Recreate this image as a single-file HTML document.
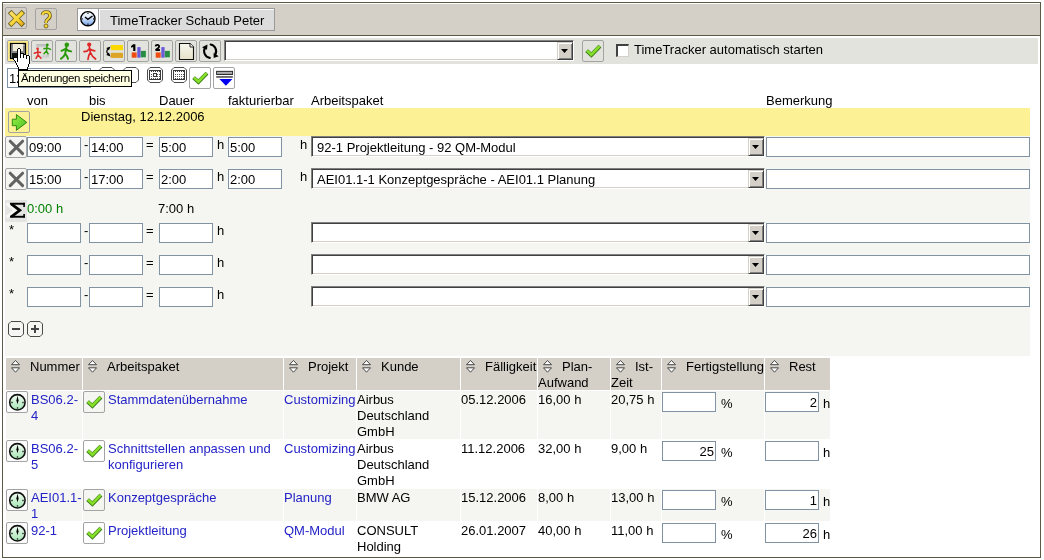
<!DOCTYPE html><html><head><meta charset="utf-8"><style>
html,body{margin:0;padding:0;background:#fff;width:1044px;height:560px;overflow:hidden}
body{position:relative;font-family:"Liberation Sans",sans-serif}
.t{position:absolute;line-height:16px;white-space:nowrap;font-family:"Liberation Sans",sans-serif;will-change:transform}
.inp{position:absolute;box-sizing:border-box;border:1px solid #8193a3;background:#fff}
.sel{position:absolute;box-sizing:border-box;background:#fff;border-top:1px solid #808080;border-left:1px solid #808080;border-right:1px solid #fff;border-bottom:1px solid #fff;box-shadow:inset 1px 1px 0 #404040,inset -1px -1px 0 #d4d0c8}
.ddb{position:absolute;box-sizing:border-box;background:#d4d0c8;border-top:1px solid #d4d0c8;border-left:1px solid #d4d0c8;border-right:1px solid #404040;border-bottom:1px solid #404040;box-shadow:inset 1px 1px 0 #fff,inset -1px -1px 0 #808080}
.tri{position:absolute;left:3px;top:6px;width:7px;height:4px;background:#000;clip-path:polygon(0 0,100% 0,50% 100%)}
.btn{position:absolute;box-sizing:border-box;border:1px solid #a3a3a3;border-radius:2px}
.ab{position:absolute}
</style></head><body>
<div style="position:absolute;left:2px;top:2px;width:1039px;height:556px;box-sizing:border-box;border:1px solid #5c5a46"></div>
<div style="position:absolute;left:3px;top:3px;width:1037px;height:1px;background:#fff"></div>
<div style="position:absolute;left:3px;top:4px;width:1037px;height:31px;background:#d4d0c8"></div>
<div style="position:absolute;left:3px;top:35px;width:1037px;height:1px;background:#5c5a46"></div>
<div style="position:absolute;left:5px;top:38px;width:1033px;height:26px;background:#e3e3de"></div>
<div class="btn" style="left:5px;top:7px;width:22px;height:22px"></div>
<svg class="ab" style="left:5px;top:7px" width="22" height="22" viewBox="0 0 22 22"><defs><linearGradient id="xg" x1="0" y1="0" x2="1" y2="1"><stop offset="0" stop-color="#fbe070"/><stop offset="0.6" stop-color="#f8d430"/><stop offset="1" stop-color="#e8a818"/></linearGradient></defs><path d="M4.6 4.6 L18.4 18.4 M18.4 4.6 L4.6 18.4" stroke="#6b6020" stroke-width="5" stroke-linecap="butt"/><path d="M5.3 5.3 L17.7 17.7 M17.7 5.3 L5.3 17.7" stroke="url(#xg)" stroke-width="3.4" stroke-linecap="butt"/></svg>
<div class="btn" style="left:35px;top:8px;width:22px;height:22px"></div>
<svg class="ab" style="left:35px;top:8px" width="22" height="22" viewBox="0 0 22 22"><path d="M7.5 7 Q8 4 11 4 Q15 4 15 7.5 Q15 10 12.5 11.5 Q11 12.5 11 15" fill="none" stroke="#6b6020" stroke-width="3.6"/><path d="M7.5 7 Q8 4 11 4 Q15 4 15 7.5 Q15 10 12.5 11.5 Q11 12.5 11 15" fill="none" stroke="#f8d838" stroke-width="2"/><circle cx="11" cy="18" r="2" fill="#f8d838" stroke="#6b6020" stroke-width="0.9"/></svg>
<div style="position:absolute;left:77px;top:8px;width:198px;height:23px;box-sizing:border-box;border:1px solid #9a9a9a;background:#dcdcdc"></div>
<div style="position:absolute;left:78px;top:9px;width:20px;height:21px;background:#fff"></div>
<div style="position:absolute;left:98px;top:9px;width:1px;height:21px;background:#a0a0a0"></div>
<div style="position:absolute;left:99px;top:9px;width:175px;height:1px;background:#fff"></div>
<div style="position:absolute;left:99px;top:9px;width:1px;height:21px;background:#fff"></div>
<svg class="ab" style="left:78px;top:9px" width="20" height="21" viewBox="0 0 20 21"><defs><linearGradient id="cg" x1="0" y1="0" x2="0" y2="1"><stop offset="0" stop-color="#ffffff"/><stop offset="0.45" stop-color="#d8e6fb"/><stop offset="1" stop-color="#6e9ee8"/></linearGradient></defs><circle cx="9.9" cy="9.7" r="7.1" fill="url(#cg)" stroke="#000" stroke-width="1.4"/><path d="M7 8 L9.9 10.3 L14.5 7" fill="none" stroke="#000" stroke-width="1.4"/><rect x="9.2" y="3.7" width="1.5" height="1.2" fill="#333"/><rect x="9.2" y="14.6" width="1.5" height="1.2" fill="#333"/><rect x="3.6" y="9.2" width="1.2" height="1.5" fill="#333"/><rect x="15" y="9.2" width="1.2" height="1.5" fill="#333"/></svg>
<div class="t" style="left:110px;top:13px;font-size:13px;color:#000;">TimeTracker Schaub Peter</div>
<div class="btn" style="left:7px;top:40px;width:22px;height:22px"></div>
<div class="btn" style="left:31px;top:40px;width:22px;height:22px"></div>
<div class="btn" style="left:55px;top:40px;width:22px;height:22px"></div>
<div class="btn" style="left:79px;top:40px;width:22px;height:22px"></div>
<div class="btn" style="left:103px;top:40px;width:22px;height:22px"></div>
<div class="btn" style="left:127px;top:40px;width:22px;height:22px"></div>
<div class="btn" style="left:151px;top:40px;width:22px;height:22px"></div>
<div class="btn" style="left:175px;top:40px;width:22px;height:22px"></div>
<div class="btn" style="left:199px;top:40px;width:22px;height:22px"></div>
<div style="position:absolute;left:8px;top:41px;width:20px;height:20px;box-sizing:border-box;border:2px solid #fbe98a"></div>
<svg class="ab" style="left:7px;top:40px" width="22" height="22" viewBox="0 0 22 22"><rect x="3.5" y="3.5" width="15" height="15" fill="#8a8a88" stroke="#000" stroke-width="1.2"/><rect x="6" y="4" width="10" height="7" fill="#f0ecd8"/><rect x="5" y="13" width="12" height="5" fill="#111"/><rect x="16.3" y="4.6" width="1" height="1.2" fill="#ddd"/></svg>
<svg class="ab" style="left:31px;top:40px" width="22" height="22" viewBox="0 0 22 22"><defs><linearGradient id="gb" x1="0" y1="0" x2="0" y2="1"><stop offset="0" stop-color="#b8b8b8"/><stop offset="1" stop-color="#e0e0e0"/></linearGradient></defs><path d="M5.2 4 L15.5 4 L15.5 7.2 L7.8 7.2 L7.8 9.5 L5.2 9.5 Z" fill="url(#gb)"/><path d="M15.6 13.8 L18.2 13.8 L18.2 18.6 L10.5 18.6 L10.5 15.6 L15.6 15.6 Z" fill="url(#gb)"/><g stroke="#dd2a2a" stroke-width="1.5" fill="none" stroke-linecap="round"><path d="M6.8 10 L7 15 M3.3 13.3 L6.8 12 L9.5 12.6 M7 15 L5 18.3 M7 15 L10 18.2"/></g><circle cx="6.6" cy="8.7" r="1.3" fill="#dd2a2a"/><g stroke="#2a9a0a" stroke-width="1.5" fill="none" stroke-linecap="round"><path d="M16 6 L15.5 11 M13 8.7 L16 7.8 L19.5 9.4 M15.5 11 L13 13.8 M15.5 11 L17 13.7"/></g><circle cx="16.3" cy="4.9" r="1.4" fill="#2a9a0a"/></svg>
<svg class="ab" style="left:55px;top:40px" width="22" height="22" viewBox="0 0 22 22"><g stroke="#2a9a0a" stroke-width="2" fill="none" stroke-linecap="round" stroke-linejoin="round"><path d="M11.4 7 L10.2 13.6 M6.5 10.8 L10.6 8.8 L13.6 10.8 L16.2 11.4 M10.2 13.6 L8.6 16.6 L6 18.8 M10.2 13.6 L12 16.2 L13 18.9"/></g><circle cx="11.8" cy="4.7" r="2.3" fill="#2a9a0a"/></svg>
<svg class="ab" style="left:79px;top:40px" width="22" height="22" viewBox="0 0 22 22"><g stroke="#de2828" stroke-width="1.7" fill="none" stroke-linecap="round" stroke-linejoin="round"><path d="M10.3 6.5 L11.4 12.4 M5 11.6 L8 11.2 L10.6 8.6 L13 10.2 L15.8 10.8 M11.4 12.4 L9.8 15.5 L9 19.4 M11.4 12.4 L13.6 16.4 L16.6 19"/></g><circle cx="10.2" cy="4.5" r="2.1" fill="#de2828"/></svg>
<svg class="ab" style="left:103px;top:40px" width="22" height="22" viewBox="0 0 22 22"><rect x="7.8" y="5" width="12.2" height="5.2" fill="#fbd800"/><rect x="7.8" y="12.8" width="12.2" height="5.1" fill="#dea524"/><path d="M5 9 Q2.6 11.4 5 13.8" fill="none" stroke="#111" stroke-width="1.3"/><path d="M3.2 7.9 L7.6 6.4 L5.9 10.2 Z M3.2 14.9 L7.6 16.4 L5.9 12.6 Z" fill="#000"/></svg>
<svg class="ab" style="left:127px;top:40px" width="22" height="22" viewBox="0 0 22 22"><path d="M6.2 4.2 H8.4 V11.1 H6.2 V7 L4.1 7.8 V5.9 Z" fill="#000"/><rect x="4.7" y="12.4" width="5" height="5.3" fill="#f04e10"/><rect x="10.3" y="7.1" width="3.3" height="10.6" fill="#6a5ad6"/><rect x="13.8" y="10.9" width="4.8" height="6.4" fill="#2a8a4a"/><rect x="17.6" y="10.9" width="1" height="6.2" fill="#1c9a2a"/></svg>
<svg class="ab" style="left:151px;top:40px" width="22" height="22" viewBox="0 0 22 22"><path d="M4.5 6.4 Q4.7 4.9 6.4 4.9 Q8.1 4.9 8.1 6.5 Q8.1 7.6 6.7 8.5 L4.6 10 H8.9" fill="none" stroke="#000" stroke-width="1.8" stroke-linejoin="bevel"/><rect x="4.7" y="12.4" width="5" height="5.3" fill="#f04e10"/><rect x="10.3" y="7.1" width="3.3" height="10.6" fill="#6a5ad6"/><rect x="13.8" y="10.9" width="4.8" height="6.4" fill="#2a8a4a"/><rect x="17.6" y="10.9" width="1" height="6.2" fill="#1c9a2a"/></svg>
<svg class="ab" style="left:175px;top:40px" width="22" height="22" viewBox="0 0 22 22"><defs><linearGradient id="dg" x1="0" y1="0" x2="0" y2="1"><stop offset="0" stop-color="#f6f6ee"/><stop offset="1" stop-color="#e6e2c8"/></linearGradient></defs><path d="M4.5 3.5 L15 3.5 L18.5 7 L18.5 19.5 L4.5 19.5 Z" fill="url(#dg)" stroke="#111" stroke-width="1.1"/><path d="M15 3.5 L15 7 L18.5 7" fill="#fff" stroke="#111" stroke-width="0.9"/></svg>
<svg class="ab" style="left:199px;top:40px" width="22" height="22" viewBox="0 0 22 22"><g fill="none" stroke="#000" stroke-width="2.1" stroke-linecap="round"><path d="M10.8 17.9 A6.8 6.8 0 0 1 6.3 7.4"/><path d="M11.6 4.5 A6.8 6.8 0 0 1 16.2 14.6"/></g><path d="M3 7.3 L8.5 4.5 L8 9.8 Z" fill="#000"/><path d="M14.6 13 L19.7 16.2 L14.7 18 Z" fill="#000"/></svg>
<div class="sel" style="left:224px;top:40px;width:350px;height:21px"></div>
<div class="ddb" style="left:557px;top:42px;width:16px;height:18px"><div class="tri"></div></div>
<div class="btn" style="left:582px;top:40px;width:22px;height:22px"></div>
<svg class="ab" style="left:582px;top:40px" width="22" height="22" viewBox="0 0 22 22"><path d="M4.6 10.6 L9.4 15.0 L18.0 6.2" fill="none" stroke="#3a7a18" stroke-width="4" stroke-linecap="butt" stroke-linejoin="miter"/><path d="M5.0 10.6 L9.4 14.6 L17.6 6.2" fill="none" stroke="#86e02a" stroke-width="2.6" stroke-linecap="butt" stroke-linejoin="miter"/></svg>
<div style="position:absolute;left:616px;top:44px;width:13px;height:13px;box-sizing:border-box;background:#fff;border-top:2px solid #404040;border-left:2px solid #404040;border-right:1px solid #d4d0c8;border-bottom:1px solid #d4d0c8"></div>
<div class="t" style="left:634px;top:42px;font-size:13px;color:#000;">TimeTracker automatisch starten</div>
<div class="inp" style="left:7px;top:68px;width:84px;height:20px;background:#fff"></div>
<div class="t" style="left:9px;top:71px;font-size:13px;color:#000;">12.12.2006</div>
<svg class="ab" style="left:99px;top:67px" width="16" height="16" viewBox="0 0 16 16"><path d="M3 0.5 H13 L15.5 3 V13 L13 15.5 H3 L0.5 13 V3 Z" fill="none" stroke="#4a4a4a" stroke-width="1"/></svg>
<svg class="ab" style="left:123px;top:67px" width="16" height="16" viewBox="0 0 16 16"><path d="M3 0.5 H13 L15.5 3 V13 L13 15.5 H3 L0.5 13 V3 Z" fill="none" stroke="#4a4a4a" stroke-width="1"/></svg>
<svg class="ab" style="left:147px;top:67px" width="16" height="16" viewBox="0 0 16 16"><path d="M3 0.5 H13 L15.5 3 V13 L13 15.5 H3 L0.5 13 V3 Z" fill="none" stroke="#4a4a4a" stroke-width="1"/></svg>
<svg class="ab" style="left:147px;top:67px" width="16" height="16" viewBox="0 0 16 16"><g shape-rendering="crispEdges"><rect x="2" y="3" width="12" height="10" fill="#3a3a3a"/><rect x="3" y="5" width="10" height="7" fill="#fff"/><rect x="3" y="4" width="1" height="1" fill="#fff"/><rect x="5" y="4" width="1" height="1" fill="#fff"/><rect x="7" y="4" width="1" height="1" fill="#fff"/><rect x="9" y="4" width="1" height="1" fill="#fff"/><rect x="11" y="4" width="1" height="1" fill="#fff"/><rect x="4" y="7" width="1" height="1" fill="#555"/><rect x="4" y="9" width="1" height="1" fill="#555"/><rect x="6" y="7" width="1" height="1" fill="#555"/><rect x="6" y="9" width="1" height="1" fill="#555"/><rect x="8" y="7" width="1" height="1" fill="#555"/><rect x="8" y="9" width="1" height="1" fill="#555"/><rect x="10" y="7" width="1" height="1" fill="#555"/><rect x="10" y="9" width="1" height="1" fill="#555"/><rect x="12" y="7" width="1" height="1" fill="#555"/><rect x="12" y="9" width="1" height="1" fill="#555"/><rect x="4" y="11" width="1" height="1" fill="#555"/><rect x="6" y="11" width="1" height="1" fill="#555"/><rect x="8" y="11" width="1" height="1" fill="#555"/><rect x="10" y="11" width="1" height="1" fill="#555"/><rect x="12" y="11" width="1" height="1" fill="#555"/><rect x="6" y="6" width="4" height="4" fill="#3a3a3a"/><rect x="7" y="7" width="2" height="2" fill="#fff"/></g></svg>
<svg class="ab" style="left:171px;top:67px" width="16" height="16" viewBox="0 0 16 16"><path d="M3 0.5 H13 L15.5 3 V13 L13 15.5 H3 L0.5 13 V3 Z" fill="none" stroke="#4a4a4a" stroke-width="1"/></svg>
<svg class="ab" style="left:171px;top:67px" width="16" height="16" viewBox="0 0 16 16"><g shape-rendering="crispEdges"><rect x="2" y="3" width="12" height="10" fill="#3a3a3a"/><rect x="3" y="5" width="10" height="7" fill="#fff"/><rect x="3" y="4" width="1" height="1" fill="#fff"/><rect x="5" y="4" width="1" height="1" fill="#fff"/><rect x="7" y="4" width="1" height="1" fill="#fff"/><rect x="9" y="4" width="1" height="1" fill="#fff"/><rect x="11" y="4" width="1" height="1" fill="#fff"/><rect x="4" y="7" width="1" height="1" fill="#555"/><rect x="4" y="9" width="1" height="1" fill="#555"/><rect x="6" y="7" width="1" height="1" fill="#555"/><rect x="6" y="9" width="1" height="1" fill="#555"/><rect x="8" y="7" width="1" height="1" fill="#555"/><rect x="8" y="9" width="1" height="1" fill="#555"/><rect x="10" y="7" width="1" height="1" fill="#555"/><rect x="10" y="9" width="1" height="1" fill="#555"/><rect x="12" y="7" width="1" height="1" fill="#555"/><rect x="12" y="9" width="1" height="1" fill="#555"/><rect x="4" y="11" width="1" height="1" fill="#555"/><rect x="6" y="11" width="1" height="1" fill="#555"/><rect x="8" y="11" width="1" height="1" fill="#555"/><rect x="10" y="11" width="1" height="1" fill="#555"/><rect x="12" y="11" width="1" height="1" fill="#555"/></g></svg>
<div class="btn" style="left:189px;top:67px;width:22px;height:22px"></div>
<svg class="ab" style="left:189px;top:67px" width="22" height="22" viewBox="0 0 22 22"><path d="M4.6 10.6 L9.4 15.0 L18.0 6.2" fill="none" stroke="#3a7a18" stroke-width="4" stroke-linecap="butt" stroke-linejoin="miter"/><path d="M5.0 10.6 L9.4 14.6 L17.6 6.2" fill="none" stroke="#86e02a" stroke-width="2.6" stroke-linecap="butt" stroke-linejoin="miter"/></svg>
<div class="btn" style="left:213px;top:67px;width:22px;height:22px"></div>
<svg class="ab" style="left:213px;top:67px" width="22" height="22" viewBox="0 0 22 22"><defs><linearGradient id="fg" x1="0" y1="0" x2="0" y2="1"><stop offset="0" stop-color="#555"/><stop offset="0.5" stop-color="#ccc"/><stop offset="1" stop-color="#555"/></linearGradient></defs><rect x="3.6" y="4.3" width="16" height="3.2" fill="url(#fg)" stroke="#222" stroke-width="0.9"/><rect x="3.2" y="9.1" width="16.6" height="1.7" fill="#5a5a5a"/><path d="M6.4 12 L19.4 12 L12.9 18.7 Z" fill="#0000f0"/></svg>
<div class="t" style="left:27px;top:93px;font-size:13px;color:#000;">von</div>
<div class="t" style="left:89px;top:93px;font-size:13px;color:#000;">bis</div>
<div class="t" style="left:159px;top:93px;font-size:13px;color:#000;">Dauer</div>
<div class="t" style="left:228px;top:93px;font-size:13px;color:#000;">fakturierbar</div>
<div class="t" style="left:311px;top:93px;font-size:13px;color:#000;">Arbeitspaket</div>
<div class="t" style="left:766px;top:93px;font-size:13px;color:#000;">Bemerkung</div>
<div style="position:absolute;left:5px;top:108px;width:1025px;height:28px;background:#fcf295"></div>
<div class="btn" style="left:8px;top:111px;width:22px;height:22px"></div>
<svg class="ab" style="left:8px;top:111px" width="22" height="22" viewBox="0 0 22 22"><defs><linearGradient id="ag" x1="0" y1="0" x2="1" y2="1"><stop offset="0" stop-color="#9ef048"/><stop offset="1" stop-color="#46c020"/></linearGradient></defs><path d="M4.3 8.2 L8.4 8.2 L8.4 3.6 L18.8 11.4 L8.4 19.3 L8.4 14.7 L4.3 14.7 Z" fill="url(#ag)" stroke="#2e8a10" stroke-width="1"/></svg>
<div class="t" style="left:81px;top:109px;font-size:13px;color:#000;">Dienstag, 12.12.2006</div>
<div style="position:absolute;left:5px;top:136px;width:1025px;height:220px;background:#f5f5f1"></div>
<div class="btn" style="left:5px;top:136px;width:22px;height:22px"></div>
<svg class="ab" style="left:5px;top:136px" width="22" height="22" viewBox="0 0 22 22"><path d="M5.2 5.2 L17.6 17.6 M17.6 5.2 L5.2 17.6" stroke="#626262" stroke-width="3" stroke-linecap="round"/></svg>
<div class="inp" style="left:27px;top:137px;width:54px;height:20px;background:#fff"></div>
<div class="t" style="left:29px;top:140px;font-size:13px;color:#000;">09:00</div>
<div class="t" style="left:84px;top:137px;font-size:13px;color:#000;">-</div>
<div class="inp" style="left:89px;top:137px;width:54px;height:20px;background:#fff"></div>
<div class="t" style="left:91px;top:140px;font-size:13px;color:#000;">14:00</div>
<div class="t" style="left:146px;top:137px;font-size:13px;color:#000;">=</div>
<div class="inp" style="left:159px;top:137px;width:54px;height:20px;background:#fff"></div>
<div class="t" style="left:161px;top:140px;font-size:13px;color:#000;">5:00</div>
<div class="t" style="left:217px;top:137px;font-size:13px;color:#000;">h</div>
<div class="inp" style="left:228px;top:137px;width:54px;height:20px;background:#fff"></div>
<div class="t" style="left:230px;top:140px;font-size:13px;color:#000;">5:00</div>
<div class="t" style="left:300px;top:137px;font-size:13px;color:#000;">h</div>
<div class="sel" style="left:311px;top:136px;width:454px;height:21px"></div>
<div class="ddb" style="left:748px;top:138px;width:16px;height:18px"><div class="tri"></div></div>
<div class="t" style="left:317px;top:140px;font-size:13px;color:#000;">92-1 Projektleitung - 92 QM-Modul</div>
<div class="inp" style="left:766px;top:137px;width:264px;height:20px;background:#fff"></div>
<div class="btn" style="left:5px;top:168px;width:22px;height:22px"></div>
<svg class="ab" style="left:5px;top:168px" width="22" height="22" viewBox="0 0 22 22"><path d="M5.2 5.2 L17.6 17.6 M17.6 5.2 L5.2 17.6" stroke="#626262" stroke-width="3" stroke-linecap="round"/></svg>
<div class="inp" style="left:27px;top:169px;width:54px;height:20px;background:#fff"></div>
<div class="t" style="left:29px;top:172px;font-size:13px;color:#000;">15:00</div>
<div class="t" style="left:84px;top:169px;font-size:13px;color:#000;">-</div>
<div class="inp" style="left:89px;top:169px;width:54px;height:20px;background:#fff"></div>
<div class="t" style="left:91px;top:172px;font-size:13px;color:#000;">17:00</div>
<div class="t" style="left:146px;top:169px;font-size:13px;color:#000;">=</div>
<div class="inp" style="left:159px;top:169px;width:54px;height:20px;background:#fff"></div>
<div class="t" style="left:161px;top:172px;font-size:13px;color:#000;">2:00</div>
<div class="t" style="left:217px;top:169px;font-size:13px;color:#000;">h</div>
<div class="inp" style="left:228px;top:169px;width:54px;height:20px;background:#fff"></div>
<div class="t" style="left:230px;top:172px;font-size:13px;color:#000;">2:00</div>
<div class="t" style="left:300px;top:169px;font-size:13px;color:#000;">h</div>
<div class="sel" style="left:311px;top:168px;width:454px;height:21px"></div>
<div class="ddb" style="left:748px;top:170px;width:16px;height:18px"><div class="tri"></div></div>
<div class="t" style="left:317px;top:172px;font-size:13px;color:#000;">AEI01.1-1 Konzeptgespräche - AEI01.1 Planung</div>
<div class="inp" style="left:766px;top:169px;width:264px;height:20px;background:#fff"></div>
<div style="position:absolute;left:5px;top:200px;width:22px;height:22px;background:#e4e4e2"></div>
<svg class="ab" style="left:5px;top:200px" width="22" height="22" viewBox="0 0 22 22"><path d="M1.5 3.5 L10.5 10.3 L1.5 17.2" fill="none" stroke="#f6f6f4" stroke-width="3.2"/><rect x="5" y="2.8" width="14.9" height="1.9" fill="#000"/><rect x="18.3" y="2.8" width="1.6" height="4.2" fill="#000"/><rect x="5" y="15.8" width="14.9" height="1.9" fill="#000"/><rect x="18.3" y="14" width="1.6" height="3.7" fill="#000"/><path d="M6.2 3.8 L14.8 10.3 L6.2 16.8" fill="none" stroke="#000" stroke-width="2.7" stroke-linejoin="miter" stroke-miterlimit="10"/></svg>
<div class="t" style="left:27px;top:201px;font-size:13px;color:#008000;">0:00 h</div>
<div class="t" style="left:158px;top:201px;font-size:13px;color:#000;">7:00 h</div>
<div class="t" style="left:9px;top:222px;font-size:13px;color:#000;">*</div>
<div class="inp" style="left:27px;top:223px;width:54px;height:20px;background:#fff"></div>
<div class="t" style="left:84px;top:223px;font-size:13px;color:#000;">-</div>
<div class="inp" style="left:89px;top:223px;width:54px;height:20px;background:#fff"></div>
<div class="t" style="left:146px;top:223px;font-size:13px;color:#000;">=</div>
<div class="inp" style="left:159px;top:223px;width:54px;height:20px;background:#fff"></div>
<div class="t" style="left:217px;top:223px;font-size:13px;color:#000;">h</div>
<div class="sel" style="left:311px;top:222px;width:454px;height:21px"></div>
<div class="ddb" style="left:748px;top:224px;width:16px;height:18px"><div class="tri"></div></div>
<div class="inp" style="left:766px;top:223px;width:264px;height:20px;background:#fff"></div>
<div class="t" style="left:9px;top:254px;font-size:13px;color:#000;">*</div>
<div class="inp" style="left:27px;top:255px;width:54px;height:20px;background:#fff"></div>
<div class="t" style="left:84px;top:255px;font-size:13px;color:#000;">-</div>
<div class="inp" style="left:89px;top:255px;width:54px;height:20px;background:#fff"></div>
<div class="t" style="left:146px;top:255px;font-size:13px;color:#000;">=</div>
<div class="inp" style="left:159px;top:255px;width:54px;height:20px;background:#fff"></div>
<div class="t" style="left:217px;top:255px;font-size:13px;color:#000;">h</div>
<div class="sel" style="left:311px;top:254px;width:454px;height:21px"></div>
<div class="ddb" style="left:748px;top:256px;width:16px;height:18px"><div class="tri"></div></div>
<div class="inp" style="left:766px;top:255px;width:264px;height:20px;background:#fff"></div>
<div class="t" style="left:9px;top:286px;font-size:13px;color:#000;">*</div>
<div class="inp" style="left:27px;top:287px;width:54px;height:20px;background:#fff"></div>
<div class="t" style="left:84px;top:287px;font-size:13px;color:#000;">-</div>
<div class="inp" style="left:89px;top:287px;width:54px;height:20px;background:#fff"></div>
<div class="t" style="left:146px;top:287px;font-size:13px;color:#000;">=</div>
<div class="inp" style="left:159px;top:287px;width:54px;height:20px;background:#fff"></div>
<div class="t" style="left:217px;top:287px;font-size:13px;color:#000;">h</div>
<div class="sel" style="left:311px;top:286px;width:454px;height:21px"></div>
<div class="ddb" style="left:748px;top:288px;width:16px;height:18px"><div class="tri"></div></div>
<div class="inp" style="left:766px;top:287px;width:264px;height:20px;background:#fff"></div>
<svg class="ab" style="left:8px;top:321px" width="16" height="16" viewBox="0 0 16 16"><path d="M3 0.5 H13 L15.5 3 V13 L13 15.5 H3 L0.5 13 V3 Z" fill="none" stroke="#4a4a4a" stroke-width="1"/></svg>
<svg class="ab" style="left:8px;top:321px" width="16" height="16" viewBox="0 0 16 16"><g shape-rendering="crispEdges"><rect x="4" y="7" width="8" height="2" fill="#444"/></g></svg>
<svg class="ab" style="left:27px;top:321px" width="16" height="16" viewBox="0 0 16 16"><path d="M3 0.5 H13 L15.5 3 V13 L13 15.5 H3 L0.5 13 V3 Z" fill="none" stroke="#4a4a4a" stroke-width="1"/></svg>
<svg class="ab" style="left:27px;top:321px" width="16" height="16" viewBox="0 0 16 16"><g shape-rendering="crispEdges"><rect x="4" y="7" width="8" height="2" fill="#444"/><rect x="7" y="4" width="2" height="8" fill="#444"/></g></svg>
<div style="position:absolute;left:6px;top:358px;width:76px;height:32px;background:#d4d0c8"></div>
<svg class="ab" style="left:11px;top:359px" width="10" height="15" viewBox="0 0 10 15"><path d="M4.5 1.5 L8.5 5.7 L0.5 5.7 Z" fill="#fff" stroke="#404040" stroke-width="0.95" stroke-linejoin="round"/><path d="M0.5 8.8 L8.5 8.8 L4.5 13.2 Z" fill="#fff" stroke="#404040" stroke-width="0.95" stroke-linejoin="round"/></svg>
<div class="t" style="left:30px;top:359px;font-size:13px;color:#000;">Nummer</div>
<div style="position:absolute;left:83px;top:358px;width:200px;height:32px;background:#d4d0c8"></div>
<svg class="ab" style="left:88px;top:359px" width="10" height="15" viewBox="0 0 10 15"><path d="M4.5 1.5 L8.5 5.7 L0.5 5.7 Z" fill="#fff" stroke="#404040" stroke-width="0.95" stroke-linejoin="round"/><path d="M0.5 8.8 L8.5 8.8 L4.5 13.2 Z" fill="#fff" stroke="#404040" stroke-width="0.95" stroke-linejoin="round"/></svg>
<div class="t" style="left:107px;top:359px;font-size:13px;color:#000;">Arbeitspaket</div>
<div style="position:absolute;left:284px;top:358px;width:72px;height:32px;background:#d4d0c8"></div>
<svg class="ab" style="left:289px;top:359px" width="10" height="15" viewBox="0 0 10 15"><path d="M4.5 1.5 L8.5 5.7 L0.5 5.7 Z" fill="#fff" stroke="#404040" stroke-width="0.95" stroke-linejoin="round"/><path d="M0.5 8.8 L8.5 8.8 L4.5 13.2 Z" fill="#fff" stroke="#404040" stroke-width="0.95" stroke-linejoin="round"/></svg>
<div class="t" style="left:308px;top:359px;font-size:13px;color:#000;">Projekt</div>
<div style="position:absolute;left:357px;top:358px;width:103px;height:32px;background:#d4d0c8"></div>
<svg class="ab" style="left:362px;top:359px" width="10" height="15" viewBox="0 0 10 15"><path d="M4.5 1.5 L8.5 5.7 L0.5 5.7 Z" fill="#fff" stroke="#404040" stroke-width="0.95" stroke-linejoin="round"/><path d="M0.5 8.8 L8.5 8.8 L4.5 13.2 Z" fill="#fff" stroke="#404040" stroke-width="0.95" stroke-linejoin="round"/></svg>
<div class="t" style="left:381px;top:359px;font-size:13px;color:#000;">Kunde</div>
<div style="position:absolute;left:461px;top:358px;width:76px;height:32px;background:#d4d0c8"></div>
<svg class="ab" style="left:466px;top:359px" width="10" height="15" viewBox="0 0 10 15"><path d="M4.5 1.5 L8.5 5.7 L0.5 5.7 Z" fill="#fff" stroke="#404040" stroke-width="0.95" stroke-linejoin="round"/><path d="M0.5 8.8 L8.5 8.8 L4.5 13.2 Z" fill="#fff" stroke="#404040" stroke-width="0.95" stroke-linejoin="round"/></svg>
<div class="t" style="left:485px;top:359px;font-size:13px;color:#000;">Fälligkeit</div>
<div style="position:absolute;left:538px;top:358px;width:72px;height:32px;background:#d4d0c8"></div>
<svg class="ab" style="left:543px;top:359px" width="10" height="15" viewBox="0 0 10 15"><path d="M4.5 1.5 L8.5 5.7 L0.5 5.7 Z" fill="#fff" stroke="#404040" stroke-width="0.95" stroke-linejoin="round"/><path d="M0.5 8.8 L8.5 8.8 L4.5 13.2 Z" fill="#fff" stroke="#404040" stroke-width="0.95" stroke-linejoin="round"/></svg>
<div class="t" style="left:562px;top:359px;font-size:13px;color:#000;">Plan-</div>
<div style="position:absolute;left:611px;top:358px;width:50px;height:32px;background:#d4d0c8"></div>
<svg class="ab" style="left:616px;top:359px" width="10" height="15" viewBox="0 0 10 15"><path d="M4.5 1.5 L8.5 5.7 L0.5 5.7 Z" fill="#fff" stroke="#404040" stroke-width="0.95" stroke-linejoin="round"/><path d="M0.5 8.8 L8.5 8.8 L4.5 13.2 Z" fill="#fff" stroke="#404040" stroke-width="0.95" stroke-linejoin="round"/></svg>
<div class="t" style="left:635px;top:359px;font-size:13px;color:#000;">Ist-</div>
<div style="position:absolute;left:662px;top:358px;width:102px;height:32px;background:#d4d0c8"></div>
<svg class="ab" style="left:667px;top:359px" width="10" height="15" viewBox="0 0 10 15"><path d="M4.5 1.5 L8.5 5.7 L0.5 5.7 Z" fill="#fff" stroke="#404040" stroke-width="0.95" stroke-linejoin="round"/><path d="M0.5 8.8 L8.5 8.8 L4.5 13.2 Z" fill="#fff" stroke="#404040" stroke-width="0.95" stroke-linejoin="round"/></svg>
<div class="t" style="left:686px;top:359px;font-size:13px;color:#000;">Fertigstellung</div>
<div style="position:absolute;left:765px;top:358px;width:65px;height:32px;background:#d4d0c8"></div>
<svg class="ab" style="left:770px;top:359px" width="10" height="15" viewBox="0 0 10 15"><path d="M4.5 1.5 L8.5 5.7 L0.5 5.7 Z" fill="#fff" stroke="#404040" stroke-width="0.95" stroke-linejoin="round"/><path d="M0.5 8.8 L8.5 8.8 L4.5 13.2 Z" fill="#fff" stroke="#404040" stroke-width="0.95" stroke-linejoin="round"/></svg>
<div class="t" style="left:789px;top:359px;font-size:13px;color:#000;">Rest</div>
<div class="t" style="left:538px;top:375px;font-size:13px;color:#000;">Aufwand</div>
<div class="t" style="left:611px;top:375px;font-size:13px;color:#000;">Zeit</div>
<div style="position:absolute;left:6px;top:391px;width:76px;height:48px;background:#f5f5f1"></div>
<div style="position:absolute;left:83px;top:391px;width:200px;height:48px;background:#f5f5f1"></div>
<div style="position:absolute;left:284px;top:391px;width:72px;height:48px;background:#f5f5f1"></div>
<div style="position:absolute;left:357px;top:391px;width:103px;height:48px;background:#f5f5f1"></div>
<div style="position:absolute;left:461px;top:391px;width:76px;height:48px;background:#f5f5f1"></div>
<div style="position:absolute;left:538px;top:391px;width:72px;height:48px;background:#f5f5f1"></div>
<div style="position:absolute;left:611px;top:391px;width:50px;height:48px;background:#f5f5f1"></div>
<div style="position:absolute;left:662px;top:391px;width:102px;height:48px;background:#f5f5f1"></div>
<div style="position:absolute;left:765px;top:391px;width:65px;height:48px;background:#f5f5f1"></div>
<div class="btn" style="left:6px;top:391px;width:22px;height:22px;background:#fbfbfb"></div>
<svg class="ab" style="left:6px;top:391px" width="22" height="22" viewBox="0 0 22 22"><defs><linearGradient id="clg" x1="0" y1="0" x2="0" y2="1"><stop offset="0" stop-color="#f0faf2"/><stop offset="1" stop-color="#a6e6b4"/></linearGradient></defs><circle cx="11.4" cy="11.3" r="7.7" fill="url(#clg)" stroke="#111" stroke-width="1.6"/><path d="M11.5 4.8 L12.6 9.6 L11.5 13.2 L10.4 9.6 Z" fill="#000"/><rect x="10.8" y="16.3" width="1.4" height="1.4" fill="#222"/><rect x="5.3" y="10.8" width="1.4" height="1.4" fill="#222"/><rect x="16.3" y="10.8" width="1.4" height="1.4" fill="#222"/></svg>
<div class="t" style="left:31px;top:392px;font-size:13px;color:#2323c8;">BS06.2-</div>
<div class="t" style="left:31px;top:408px;font-size:13px;color:#2323c8;">4</div>
<div class="btn" style="left:83px;top:391px;width:22px;height:22px"></div>
<svg class="ab" style="left:83px;top:391px" width="22" height="22" viewBox="0 0 22 22"><path d="M4.6 10.6 L9.4 15.0 L18.0 6.2" fill="none" stroke="#3a7a18" stroke-width="4" stroke-linecap="butt" stroke-linejoin="miter"/><path d="M5.0 10.6 L9.4 14.6 L17.6 6.2" fill="none" stroke="#86e02a" stroke-width="2.6" stroke-linecap="butt" stroke-linejoin="miter"/></svg>
<div class="t" style="left:108px;top:392px;font-size:13px;color:#2323c8;">Stammdatenübernahme</div>
<div class="t" style="left:284px;top:392px;font-size:13px;color:#2323c8;">Customizing</div>
<div class="t" style="left:357px;top:392px;font-size:13px;color:#000;">Airbus</div>
<div class="t" style="left:357px;top:408px;font-size:13px;color:#000;">Deutschland</div>
<div class="t" style="left:357px;top:424px;font-size:13px;color:#000;">GmbH</div>
<div class="t" style="left:461px;top:392px;font-size:13px;color:#000;">05.12.2006</div>
<div class="t" style="left:538px;top:392px;font-size:13px;color:#000;">16,00 h</div>
<div class="t" style="left:611px;top:392px;font-size:13px;color:#000;">20,75 h</div>
<div class="inp" style="left:662px;top:392px;width:54px;height:20px;background:#fff"></div>
<div class="t" style="left:721px;top:396px;font-size:13px;color:#000;">%</div>
<div class="inp" style="left:765px;top:392px;width:54px;height:20px;background:#fff"></div>
<div class="t" style="left:765px;top:395px;width:52px;text-align:right;font-size:13px">2</div>
<div class="t" style="left:823px;top:396px;font-size:13px;color:#000;">h</div>
<div style="position:absolute;left:6px;top:440px;width:76px;height:48px;background:#fff"></div>
<div style="position:absolute;left:83px;top:440px;width:200px;height:48px;background:#fff"></div>
<div style="position:absolute;left:284px;top:440px;width:72px;height:48px;background:#fff"></div>
<div style="position:absolute;left:357px;top:440px;width:103px;height:48px;background:#fff"></div>
<div style="position:absolute;left:461px;top:440px;width:76px;height:48px;background:#fff"></div>
<div style="position:absolute;left:538px;top:440px;width:72px;height:48px;background:#fff"></div>
<div style="position:absolute;left:611px;top:440px;width:50px;height:48px;background:#fff"></div>
<div style="position:absolute;left:662px;top:440px;width:102px;height:48px;background:#fff"></div>
<div style="position:absolute;left:765px;top:440px;width:65px;height:48px;background:#fff"></div>
<div class="btn" style="left:6px;top:440px;width:22px;height:22px;background:#fbfbfb"></div>
<svg class="ab" style="left:6px;top:440px" width="22" height="22" viewBox="0 0 22 22"><defs><linearGradient id="clg" x1="0" y1="0" x2="0" y2="1"><stop offset="0" stop-color="#f0faf2"/><stop offset="1" stop-color="#a6e6b4"/></linearGradient></defs><circle cx="11.4" cy="11.3" r="7.7" fill="url(#clg)" stroke="#111" stroke-width="1.6"/><path d="M11.5 4.8 L12.6 9.6 L11.5 13.2 L10.4 9.6 Z" fill="#000"/><rect x="10.8" y="16.3" width="1.4" height="1.4" fill="#222"/><rect x="5.3" y="10.8" width="1.4" height="1.4" fill="#222"/><rect x="16.3" y="10.8" width="1.4" height="1.4" fill="#222"/></svg>
<div class="t" style="left:31px;top:441px;font-size:13px;color:#2323c8;">BS06.2-</div>
<div class="t" style="left:31px;top:457px;font-size:13px;color:#2323c8;">5</div>
<div class="btn" style="left:83px;top:440px;width:22px;height:22px"></div>
<svg class="ab" style="left:83px;top:440px" width="22" height="22" viewBox="0 0 22 22"><path d="M4.6 10.6 L9.4 15.0 L18.0 6.2" fill="none" stroke="#3a7a18" stroke-width="4" stroke-linecap="butt" stroke-linejoin="miter"/><path d="M5.0 10.6 L9.4 14.6 L17.6 6.2" fill="none" stroke="#86e02a" stroke-width="2.6" stroke-linecap="butt" stroke-linejoin="miter"/></svg>
<div class="t" style="left:108px;top:441px;font-size:13px;color:#2323c8;">Schnittstellen anpassen und</div>
<div class="t" style="left:108px;top:457px;font-size:13px;color:#2323c8;">konfigurieren</div>
<div class="t" style="left:284px;top:441px;font-size:13px;color:#2323c8;">Customizing</div>
<div class="t" style="left:357px;top:441px;font-size:13px;color:#000;">Airbus</div>
<div class="t" style="left:357px;top:457px;font-size:13px;color:#000;">Deutschland</div>
<div class="t" style="left:357px;top:473px;font-size:13px;color:#000;">GmbH</div>
<div class="t" style="left:461px;top:441px;font-size:13px;color:#000;">11.12.2006</div>
<div class="t" style="left:538px;top:441px;font-size:13px;color:#000;">32,00 h</div>
<div class="t" style="left:611px;top:441px;font-size:13px;color:#000;">9,00 h</div>
<div class="inp" style="left:662px;top:441px;width:54px;height:20px;background:#fff"></div>
<div class="t" style="left:662px;top:444px;width:52px;text-align:right;font-size:13px">25</div>
<div class="t" style="left:721px;top:445px;font-size:13px;color:#000;">%</div>
<div class="inp" style="left:765px;top:441px;width:54px;height:20px;background:#fff"></div>
<div class="t" style="left:823px;top:445px;font-size:13px;color:#000;">h</div>
<div style="position:absolute;left:6px;top:489px;width:76px;height:32px;background:#f5f5f1"></div>
<div style="position:absolute;left:83px;top:489px;width:200px;height:32px;background:#f5f5f1"></div>
<div style="position:absolute;left:284px;top:489px;width:72px;height:32px;background:#f5f5f1"></div>
<div style="position:absolute;left:357px;top:489px;width:103px;height:32px;background:#f5f5f1"></div>
<div style="position:absolute;left:461px;top:489px;width:76px;height:32px;background:#f5f5f1"></div>
<div style="position:absolute;left:538px;top:489px;width:72px;height:32px;background:#f5f5f1"></div>
<div style="position:absolute;left:611px;top:489px;width:50px;height:32px;background:#f5f5f1"></div>
<div style="position:absolute;left:662px;top:489px;width:102px;height:32px;background:#f5f5f1"></div>
<div style="position:absolute;left:765px;top:489px;width:65px;height:32px;background:#f5f5f1"></div>
<div class="btn" style="left:6px;top:489px;width:22px;height:22px;background:#fbfbfb"></div>
<svg class="ab" style="left:6px;top:489px" width="22" height="22" viewBox="0 0 22 22"><defs><linearGradient id="clg" x1="0" y1="0" x2="0" y2="1"><stop offset="0" stop-color="#f0faf2"/><stop offset="1" stop-color="#a6e6b4"/></linearGradient></defs><circle cx="11.4" cy="11.3" r="7.7" fill="url(#clg)" stroke="#111" stroke-width="1.6"/><path d="M11.5 4.8 L12.6 9.6 L11.5 13.2 L10.4 9.6 Z" fill="#000"/><rect x="10.8" y="16.3" width="1.4" height="1.4" fill="#222"/><rect x="5.3" y="10.8" width="1.4" height="1.4" fill="#222"/><rect x="16.3" y="10.8" width="1.4" height="1.4" fill="#222"/></svg>
<div class="t" style="left:31px;top:490px;font-size:13px;color:#2323c8;">AEI01.1-</div>
<div class="t" style="left:31px;top:506px;font-size:13px;color:#2323c8;">1</div>
<div class="btn" style="left:83px;top:489px;width:22px;height:22px"></div>
<svg class="ab" style="left:83px;top:489px" width="22" height="22" viewBox="0 0 22 22"><path d="M4.6 10.6 L9.4 15.0 L18.0 6.2" fill="none" stroke="#3a7a18" stroke-width="4" stroke-linecap="butt" stroke-linejoin="miter"/><path d="M5.0 10.6 L9.4 14.6 L17.6 6.2" fill="none" stroke="#86e02a" stroke-width="2.6" stroke-linecap="butt" stroke-linejoin="miter"/></svg>
<div class="t" style="left:108px;top:490px;font-size:13px;color:#2323c8;">Konzeptgespräche</div>
<div class="t" style="left:284px;top:490px;font-size:13px;color:#2323c8;">Planung</div>
<div class="t" style="left:357px;top:490px;font-size:13px;color:#000;">BMW AG</div>
<div class="t" style="left:461px;top:490px;font-size:13px;color:#000;">15.12.2006</div>
<div class="t" style="left:538px;top:490px;font-size:13px;color:#000;">8,00 h</div>
<div class="t" style="left:611px;top:490px;font-size:13px;color:#000;">13,00 h</div>
<div class="inp" style="left:662px;top:490px;width:54px;height:20px;background:#fff"></div>
<div class="t" style="left:721px;top:494px;font-size:13px;color:#000;">%</div>
<div class="inp" style="left:765px;top:490px;width:54px;height:20px;background:#fff"></div>
<div class="t" style="left:765px;top:493px;width:52px;text-align:right;font-size:13px">1</div>
<div class="t" style="left:823px;top:494px;font-size:13px;color:#000;">h</div>
<div style="position:absolute;left:6px;top:522px;width:76px;height:32px;background:#fff"></div>
<div style="position:absolute;left:83px;top:522px;width:200px;height:32px;background:#fff"></div>
<div style="position:absolute;left:284px;top:522px;width:72px;height:32px;background:#fff"></div>
<div style="position:absolute;left:357px;top:522px;width:103px;height:32px;background:#fff"></div>
<div style="position:absolute;left:461px;top:522px;width:76px;height:32px;background:#fff"></div>
<div style="position:absolute;left:538px;top:522px;width:72px;height:32px;background:#fff"></div>
<div style="position:absolute;left:611px;top:522px;width:50px;height:32px;background:#fff"></div>
<div style="position:absolute;left:662px;top:522px;width:102px;height:32px;background:#fff"></div>
<div style="position:absolute;left:765px;top:522px;width:65px;height:32px;background:#fff"></div>
<div class="btn" style="left:6px;top:522px;width:22px;height:22px;background:#fbfbfb"></div>
<svg class="ab" style="left:6px;top:522px" width="22" height="22" viewBox="0 0 22 22"><defs><linearGradient id="clg" x1="0" y1="0" x2="0" y2="1"><stop offset="0" stop-color="#f0faf2"/><stop offset="1" stop-color="#a6e6b4"/></linearGradient></defs><circle cx="11.4" cy="11.3" r="7.7" fill="url(#clg)" stroke="#111" stroke-width="1.6"/><path d="M11.5 4.8 L12.6 9.6 L11.5 13.2 L10.4 9.6 Z" fill="#000"/><rect x="10.8" y="16.3" width="1.4" height="1.4" fill="#222"/><rect x="5.3" y="10.8" width="1.4" height="1.4" fill="#222"/><rect x="16.3" y="10.8" width="1.4" height="1.4" fill="#222"/></svg>
<div class="t" style="left:31px;top:523px;font-size:13px;color:#2323c8;">92-1</div>
<div class="btn" style="left:83px;top:522px;width:22px;height:22px"></div>
<svg class="ab" style="left:83px;top:522px" width="22" height="22" viewBox="0 0 22 22"><path d="M4.6 10.6 L9.4 15.0 L18.0 6.2" fill="none" stroke="#3a7a18" stroke-width="4" stroke-linecap="butt" stroke-linejoin="miter"/><path d="M5.0 10.6 L9.4 14.6 L17.6 6.2" fill="none" stroke="#86e02a" stroke-width="2.6" stroke-linecap="butt" stroke-linejoin="miter"/></svg>
<div class="t" style="left:108px;top:523px;font-size:13px;color:#2323c8;">Projektleitung</div>
<div class="t" style="left:284px;top:523px;font-size:13px;color:#2323c8;">QM-Modul</div>
<div class="t" style="left:357px;top:523px;font-size:13px;color:#000;">CONSULT</div>
<div class="t" style="left:357px;top:539px;font-size:13px;color:#000;">Holding</div>
<div class="t" style="left:461px;top:523px;font-size:13px;color:#000;">26.01.2007</div>
<div class="t" style="left:538px;top:523px;font-size:13px;color:#000;">40,00 h</div>
<div class="t" style="left:611px;top:523px;font-size:13px;color:#000;">11,00 h</div>
<div class="inp" style="left:662px;top:523px;width:54px;height:20px;background:#fff"></div>
<div class="t" style="left:721px;top:527px;font-size:13px;color:#000;">%</div>
<div class="inp" style="left:765px;top:523px;width:54px;height:20px;background:#fff"></div>
<div class="t" style="left:765px;top:526px;width:52px;text-align:right;font-size:13px">26</div>
<div class="t" style="left:823px;top:527px;font-size:13px;color:#000;">h</div>
<div style="position:absolute;left:18px;top:70px;width:114px;height:17px;box-sizing:border-box;border:1px solid #000;background:#ffffe1"></div>
<div class="t" style="left:21px;top:71px;font-size:11.5px;color:#000;line-height:15px;letter-spacing:-0.35px">Änderungen speichern</div>
<svg class="ab" style="left:12px;top:48px" width="18" height="22" viewBox="0 0 18 22" shape-rendering="crispEdges"><path d="M6 1h1v1h-1zM7 1h1v1h-1zM6 2h1v1h-1zM7 2h1v1h-1zM6 3h1v1h-1zM7 3h1v1h-1zM6 4h1v1h-1zM7 4h1v1h-1zM6 5h1v1h-1zM7 5h1v1h-1zM6 6h1v1h-1zM7 6h1v1h-1zM9 6h1v1h-1zM10 6h1v1h-1zM6 7h1v1h-1zM7 7h1v1h-1zM9 7h1v1h-1zM10 7h1v1h-1zM12 7h1v1h-1zM13 7h1v1h-1zM6 8h1v1h-1zM7 8h1v1h-1zM9 8h1v1h-1zM10 8h1v1h-1zM12 8h1v1h-1zM13 8h1v1h-1zM15 8h1v1h-1zM16 8h1v1h-1zM6 9h1v1h-1zM7 9h1v1h-1zM9 9h1v1h-1zM10 9h1v1h-1zM12 9h1v1h-1zM13 9h1v1h-1zM15 9h1v1h-1zM16 9h1v1h-1zM2 10h1v1h-1zM3 10h1v1h-1zM4 10h1v1h-1zM6 10h1v1h-1zM7 10h1v1h-1zM8 10h1v1h-1zM9 10h1v1h-1zM10 10h1v1h-1zM11 10h1v1h-1zM12 10h1v1h-1zM13 10h1v1h-1zM15 10h1v1h-1zM16 10h1v1h-1zM2 11h1v1h-1zM3 11h1v1h-1zM4 11h1v1h-1zM6 11h1v1h-1zM7 11h1v1h-1zM8 11h1v1h-1zM9 11h1v1h-1zM10 11h1v1h-1zM11 11h1v1h-1zM12 11h1v1h-1zM13 11h1v1h-1zM14 11h1v1h-1zM15 11h1v1h-1zM16 11h1v1h-1zM3 12h1v1h-1zM4 12h1v1h-1zM6 12h1v1h-1zM7 12h1v1h-1zM8 12h1v1h-1zM9 12h1v1h-1zM10 12h1v1h-1zM11 12h1v1h-1zM12 12h1v1h-1zM13 12h1v1h-1zM14 12h1v1h-1zM15 12h1v1h-1zM16 12h1v1h-1zM4 13h1v1h-1zM6 13h1v1h-1zM7 13h1v1h-1zM8 13h1v1h-1zM9 13h1v1h-1zM10 13h1v1h-1zM11 13h1v1h-1zM12 13h1v1h-1zM13 13h1v1h-1zM14 13h1v1h-1zM15 13h1v1h-1zM16 13h1v1h-1zM4 14h1v1h-1zM5 14h1v1h-1zM6 14h1v1h-1zM7 14h1v1h-1zM8 14h1v1h-1zM9 14h1v1h-1zM10 14h1v1h-1zM11 14h1v1h-1zM12 14h1v1h-1zM13 14h1v1h-1zM14 14h1v1h-1zM15 14h1v1h-1zM16 14h1v1h-1zM5 15h1v1h-1zM6 15h1v1h-1zM7 15h1v1h-1zM8 15h1v1h-1zM9 15h1v1h-1zM10 15h1v1h-1zM11 15h1v1h-1zM12 15h1v1h-1zM13 15h1v1h-1zM14 15h1v1h-1zM15 15h1v1h-1zM16 15h1v1h-1zM5 16h1v1h-1zM6 16h1v1h-1zM7 16h1v1h-1zM8 16h1v1h-1zM9 16h1v1h-1zM10 16h1v1h-1zM11 16h1v1h-1zM12 16h1v1h-1zM13 16h1v1h-1zM14 16h1v1h-1zM15 16h1v1h-1zM6 17h1v1h-1zM7 17h1v1h-1zM8 17h1v1h-1zM9 17h1v1h-1zM10 17h1v1h-1zM11 17h1v1h-1zM12 17h1v1h-1zM13 17h1v1h-1zM14 17h1v1h-1zM15 17h1v1h-1zM6 18h1v1h-1zM7 18h1v1h-1zM8 18h1v1h-1zM9 18h1v1h-1zM10 18h1v1h-1zM11 18h1v1h-1zM12 18h1v1h-1zM13 18h1v1h-1zM14 18h1v1h-1zM15 18h1v1h-1zM7 19h1v1h-1zM8 19h1v1h-1zM9 19h1v1h-1zM10 19h1v1h-1zM11 19h1v1h-1zM12 19h1v1h-1zM13 19h1v1h-1zM14 19h1v1h-1zM7 20h1v1h-1zM8 20h1v1h-1zM9 20h1v1h-1zM10 20h1v1h-1zM11 20h1v1h-1zM12 20h1v1h-1zM13 20h1v1h-1zM14 20h1v1h-1z" fill="#fff"/><path d="M6 0h1v1h-1zM7 0h1v1h-1zM5 1h1v1h-1zM8 1h1v1h-1zM5 2h1v1h-1zM8 2h1v1h-1zM5 3h1v1h-1zM8 3h1v1h-1zM5 4h1v1h-1zM8 4h1v1h-1zM5 5h1v1h-1zM8 5h1v1h-1zM9 5h1v1h-1zM10 5h1v1h-1zM5 6h1v1h-1zM8 6h1v1h-1zM11 6h1v1h-1zM12 6h1v1h-1zM13 6h1v1h-1zM5 7h1v1h-1zM8 7h1v1h-1zM11 7h1v1h-1zM14 7h1v1h-1zM15 7h1v1h-1zM16 7h1v1h-1zM5 8h1v1h-1zM8 8h1v1h-1zM11 8h1v1h-1zM14 8h1v1h-1zM17 8h1v1h-1zM1 9h1v1h-1zM2 9h1v1h-1zM3 9h1v1h-1zM5 9h1v1h-1zM8 9h1v1h-1zM11 9h1v1h-1zM14 9h1v1h-1zM17 9h1v1h-1zM1 10h1v1h-1zM5 10h1v1h-1zM14 10h1v1h-1zM17 10h1v1h-1zM1 11h1v1h-1zM5 11h1v1h-1zM17 11h1v1h-1zM2 12h1v1h-1zM5 12h1v1h-1zM17 12h1v1h-1zM3 13h1v1h-1zM5 13h1v1h-1zM17 13h1v1h-1zM3 14h1v1h-1zM17 14h1v1h-1zM4 15h1v1h-1zM17 15h1v1h-1zM4 16h1v1h-1zM16 16h1v1h-1zM5 17h1v1h-1zM16 17h1v1h-1zM5 18h1v1h-1zM16 18h1v1h-1zM6 19h1v1h-1zM15 19h1v1h-1zM6 20h1v1h-1zM15 20h1v1h-1zM6 21h1v1h-1zM7 21h1v1h-1zM8 21h1v1h-1zM9 21h1v1h-1zM10 21h1v1h-1zM11 21h1v1h-1zM12 21h1v1h-1zM13 21h1v1h-1zM14 21h1v1h-1zM15 21h1v1h-1z" fill="#000"/></svg>
</body></html>
